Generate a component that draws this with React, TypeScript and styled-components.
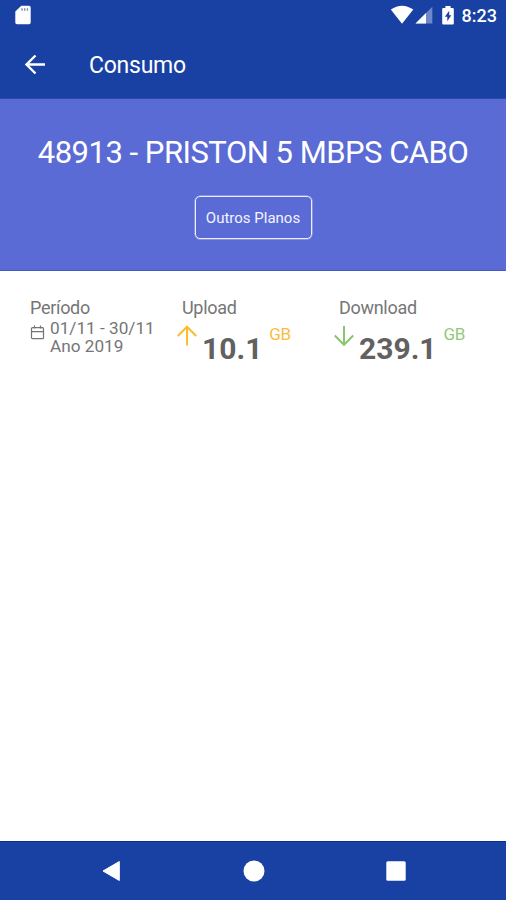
import React from 'react';
import styled, { createGlobalStyle } from 'styled-components';

const GlobalStyle = createGlobalStyle`
  * { box-sizing: border-box; }
  body { margin: 0; background: #fff; font-family: Roboto, sans-serif; }
`;

const Screen = styled.div`
  width: 506px;
  height: 900px;
  display: flex;
  flex-direction: column;
  overflow: hidden;
  background: #fff;
`;

const StatusBar = styled.div`
  height: 31px;
  flex: none;
  display: flex;
  align-items: flex-start;
  justify-content: space-between;
  padding: 0 9px 0 15px;
  background: #1941a3;
  color: #fff;
`;

const CardIcon = styled.svg`
  display: block;
  margin-top: 5px;
`;

const StatusIcons = styled.svg`
  display: block;
`;

const StatusRight = styled.div`
  display: flex;
`;

const Clock = styled.span`
  margin-left: 6px;
  padding-top: 5px;
  font-size: 18px;
  font-weight: 500;
  line-height: 22px;
  white-space: nowrap;
`;

const AppBar = styled.header`
  height: 68px;
  flex: none;
  display: flex;
  align-items: center;
  padding: 0 0 0 24px;
  gap: 43px;
  background: #1941a3;
  border-bottom: 1px solid #2c4bb0;
  color: #fff;
`;

const BackButton = styled.button`
  display: flex;
  padding: 0;
  border: 0;
  background: none;
  color: inherit;
`;

const AppTitle = styled.h1`
  margin: 0;
  padding-top: 2px;
  font-size: 23px;
  font-weight: 400;
  letter-spacing: -0.25px;
  line-height: 28px;
`;

const Hero = styled.section`
  height: 172px;
  flex: none;
  display: flex;
  flex-direction: column;
  align-items: center;
  padding-top: 36px;
  background: #5b6bd5;
  border-bottom: 1px solid #4657c6;
  color: #fff;
`;

const PlanName = styled.h2`
  margin: 0;
  font-size: 31px;
  font-weight: 400;
  letter-spacing: -0.5px;
  line-height: 36px;
  white-space: nowrap;
`;

const PlansButton = styled.button`
  width: 117px;
  height: 43px;
  margin-top: 25px;
  padding: 0;
  border: 1px solid #eceeff;
  box-shadow: 0 0 0 .5px #b4bdf0;
  border-radius: 5px;
  background: none;
  color: #f3f4ff;
  font: 400 15px/20px Roboto, sans-serif;
  white-space: nowrap;
`;

const Usage = styled.main`
  flex: 1;
  display: grid;
  grid-template-columns: 147px 157px 1fr;
  align-content: start;
  padding: 26px 0 0 30px;
  color: #767676;
`;

const Column = styled.div`
  display: flex;
  flex-direction: column;
`;

const Label = styled.div<{ $indent?: number }>`
  margin-left: ${(p) => p.$indent ?? 0}px;
  font-size: 18px;
  letter-spacing: -0.3px;
  line-height: 21px;
  white-space: nowrap;
`;

const Period = styled.div`
  display: flex;
  gap: 5px;
  padding-top: 1px;
`;

const CalendarIcon = styled.svg`
  display: block;
  flex: none;
  margin-top: 6px;
`;

const PeriodText = styled.div`
  display: flex;
  flex-direction: column;
  font-size: 17.2px;
  line-height: 18px;
  white-space: nowrap;
`;

const Reading = styled.div`
  display: flex;
  align-items: flex-start;
  padding-top: 5px;
`;

const ArrowIcon = styled.svg`
  display: block;
  flex: none;
`;

const Amount = styled.strong`
  margin: 8px 0 0 5px;
  color: #616161;
  font-size: 30px;
  font-weight: 700;
  line-height: 36px;
`;

const Unit = styled.span<{ $color: string }>`
  margin: 1px 0 0 7px;
  color: ${(p) => p.$color};
  font-size: 17px;
  letter-spacing: -0.5px;
  line-height: 20px;
`;

const NavBar = styled.nav`
  height: 59px;
  flex: none;
  background: #1941a3;
  border-top: 1px solid #0b2e98;
  display: flex;
  align-items: center;
  justify-content: space-between;
  padding: 0 100px 0 101px;
`;

const NavIcon = styled.svg`
  display: block;
`;

export default function App() {
  return (
    <>
      <GlobalStyle />
      <Screen>
        <StatusBar>
          <CardIcon width="16" height="20" viewBox="0 0 16 20">
            <path d="M6.300 .7H14a1.700 1.700 0 0 1 1.700 1.700v15.200a1.700 1.700 0 0 1-1.700 1.700H2a1.700 1.700 0 0 1-1.700-1.700V6.400z" fill="#fff" />
            <path d="M7 3.200v2.600M9.700 3.200v2.600M12.400 3.200v2.600" stroke="#7187c8" strokeWidth="1.300" />
          </CardIcon>
          <StatusRight>
            <StatusIcons width="66" height="30" viewBox="390 0 66 30">
              <path d="M390.800 9.600Q402 1.800 413.300 9.600L402 23.700z" fill="#fff" />
              <path d="M432.300 6.700V23.500H415.500z" fill="#6f88ca" />
              <path d="M426 13V23.500H415.500z" fill="#fff" />
              <path d="M445.400 6.100h5.200v1.800h2.200q1 0 1 1v14.600q0 1-1 1h-9.600q-1 0-1-1V8.900q0-1 1-1h2.200z" fill="#fff" />
              <path d="M449.200 10.800L444.900 16.800H447.300V21.200L451.300 15.200H449.200z" fill="#1941a3" />
            </StatusIcons>
            <Clock>8:23</Clock>
          </StatusRight>
        </StatusBar>
        <AppBar>
          <BackButton aria-label="Voltar">
            <svg width="22" height="22" viewBox="0 0 22 22" fill="none" stroke="currentColor" strokeWidth="2.400">
              <path d="M21 10.500H3M11.500 1.500L2.500 10.500l9 9" />
            </svg>
          </BackButton>
          <AppTitle>Consumo</AppTitle>
        </AppBar>
        <Hero>
          <PlanName>48913 - PRISTON 5 MBPS CABO</PlanName>
          <PlansButton>Outros Planos</PlansButton>
        </Hero>
        <Usage>
          <Column>
            <Label>Período</Label>
            <Period>
              <CalendarIcon width="15" height="16" viewBox="0 0 15 16" fill="none" stroke="#747474" strokeWidth="1.200">
                <rect x="1.500" y="2.700" width="12" height="11" rx="1" />
                <path d="M1.500 6.700h12M4.500 .6v3M10.500 .6v3" />
              </CalendarIcon>
              <PeriodText>
                <span>01/11 - 30/11</span>
                <span>Ano 2019</span>
              </PeriodText>
            </Period>
          </Column>
          <Column>
            <Label $indent={5}>Upload</Label>
            <Reading>
              <ArrowIcon width="20" height="24" viewBox="0 0 20 24" fill="none" stroke="#fbbc2c" strokeWidth="2">
                <path d="M10 22.500V4M.8 13L10 3.700 19.200 13" />
              </ArrowIcon>
              <Amount>10.1</Amount>
              <Unit $color="#fbbc3c">GB</Unit>
            </Reading>
          </Column>
          <Column>
            <Label $indent={5}>Download</Label>
            <Reading>
              <ArrowIcon width="20" height="24" viewBox="0 0 20 24" fill="none" stroke="#8cc56e" strokeWidth="2">
                <path d="M10 3V21.500M.8 12.500L10 21.800 19.200 12.500" />
              </ArrowIcon>
              <Amount>239.1</Amount>
              <Unit $color="#93c87a">GB</Unit>
            </Reading>
          </Column>
        </Usage>
        <NavBar>
          <NavIcon width="20" height="22" viewBox="0 0 20 22">
            <path d="M18.300 1.500v19L2 11z" fill="#fff" stroke="#fff" strokeWidth="1" strokeLinejoin="round" />
          </NavIcon>
          <NavIcon width="22" height="22" viewBox="0 0 22 22">
            <circle cx="11" cy="11" r="10.500" fill="#fff" />
          </NavIcon>
          <NavIcon width="20" height="20" viewBox="0 0 20 20">
            <rect x=".3" y=".3" width="19.400" height="19.400" rx="1.500" fill="#fff" />
          </NavIcon>
        </NavBar>
      </Screen>
    </>
  );
}
